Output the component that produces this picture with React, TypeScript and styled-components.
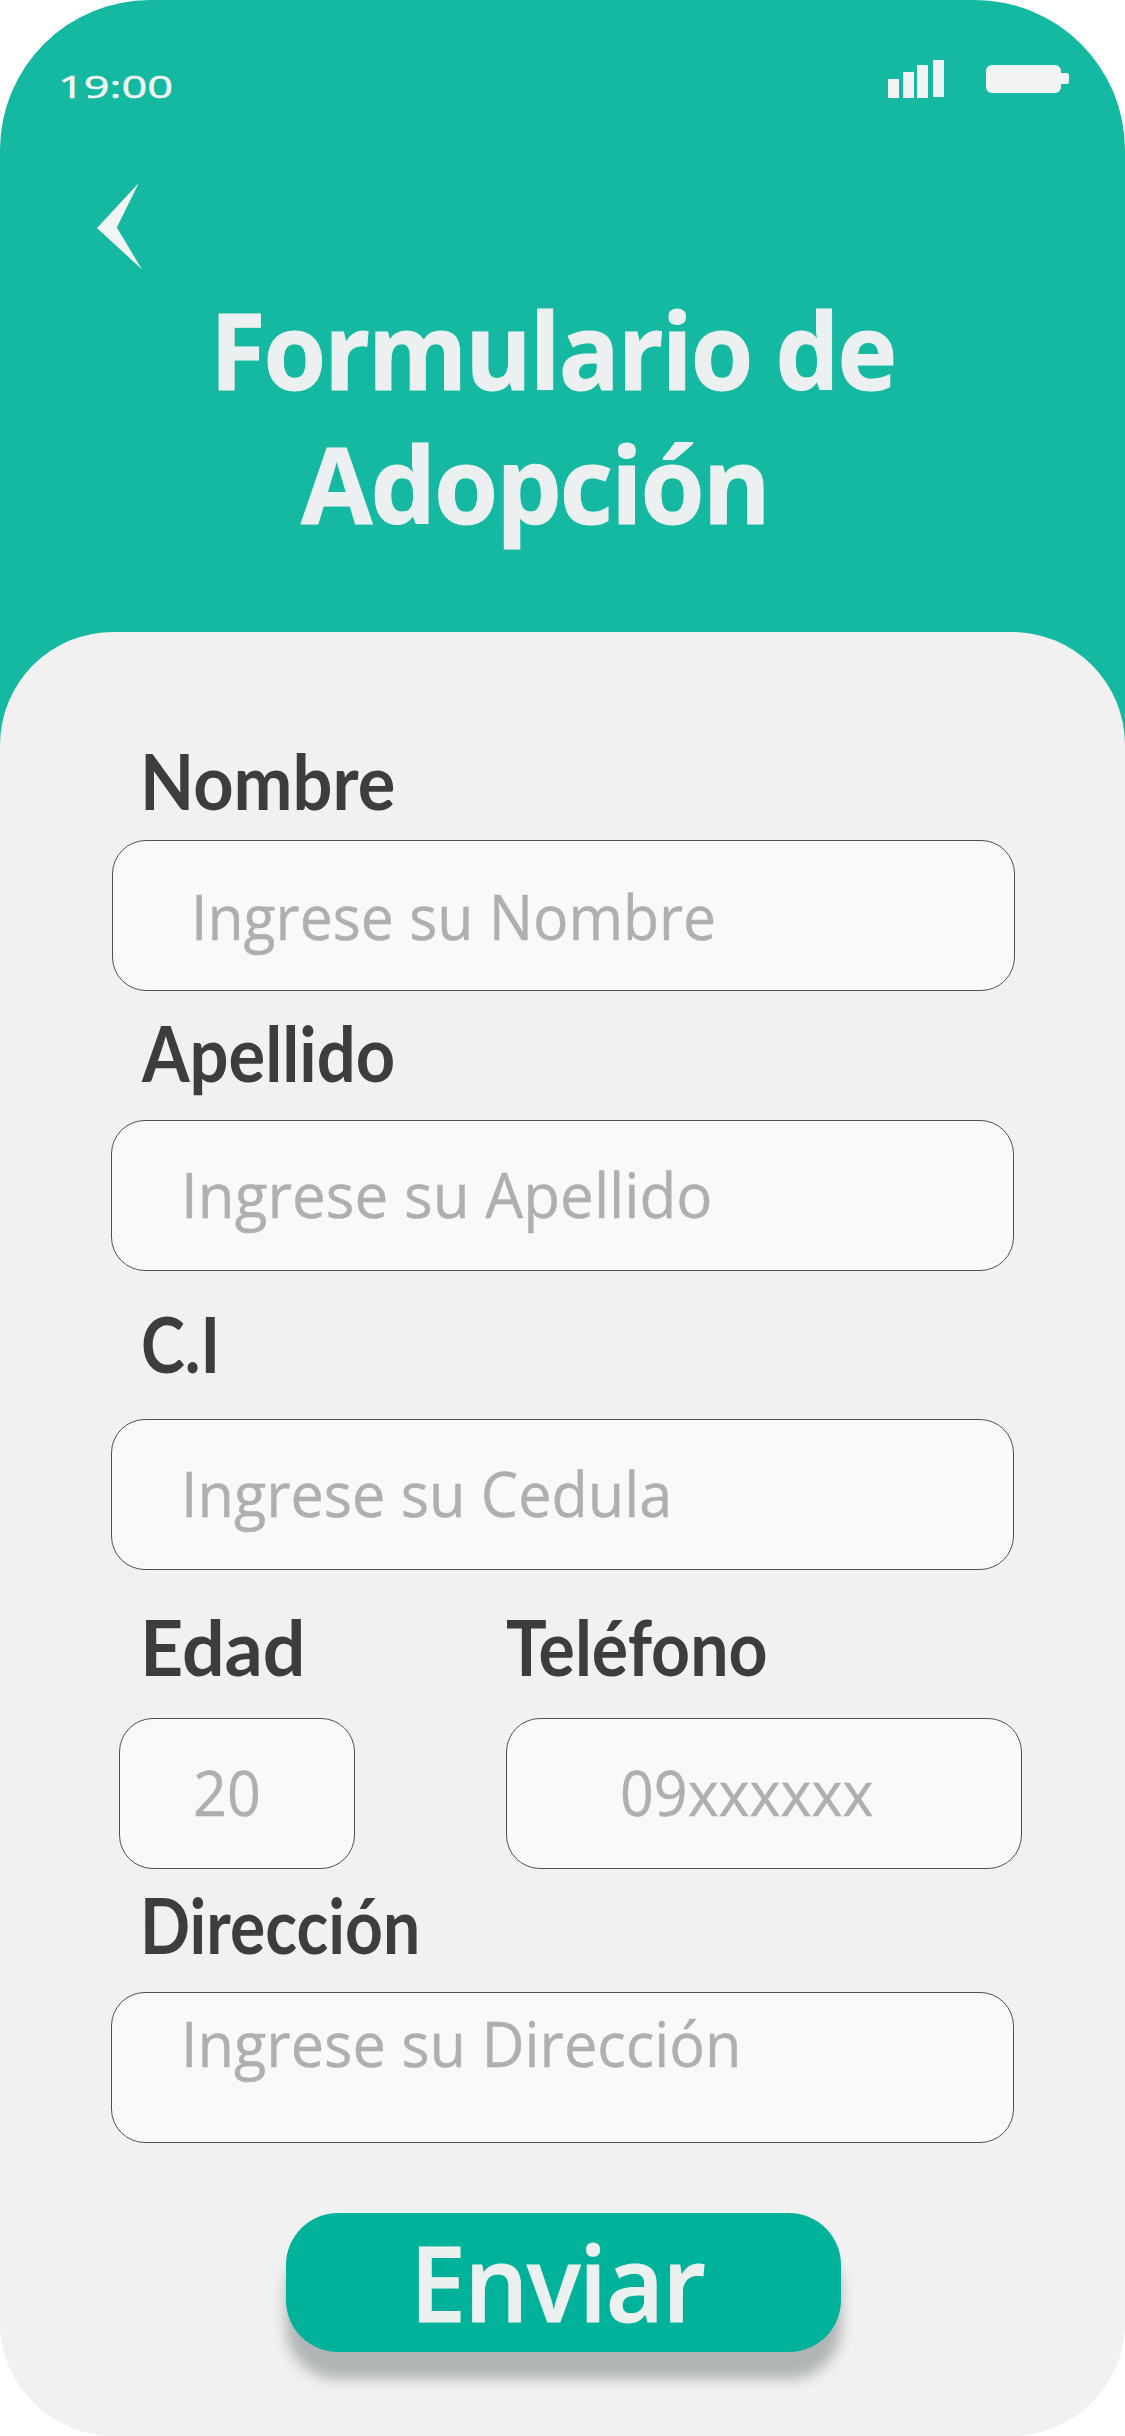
import React from "react";
import styled, { createGlobalStyle } from "styled-components";

const GlobalStyle = createGlobalStyle`
  body {
    margin: 0;
    background: #ffffff;
  }
  * {
    box-sizing: border-box;
  }
`;

const sans = `"Open Sans", "Noto Sans", sans-serif`;

const Phone = styled.main`
  display: flex;
  flex-direction: column;
  width: 1125px;
  height: 2436px;
  overflow: hidden;
  border-radius: 150px 150px 114px 114px;
  background: linear-gradient(#15b8a0 0 1200px, #f1f1f1 1200px);
  font-family: ${sans};
`;

const Header = styled.header`
  display: flex;
  flex-direction: column;
  height: 632px;
`;

const StatusBar = styled.div`
  display: flex;
  align-items: flex-start;
  height: 183px;
  padding: 60px 56px 0 58px;
`;

/* Single line of text whose glyphs are narrowed or widened to a set width. */
const Line = styled.span<{ $stretch: number }>`
  display: block;
  width: max-content;
  white-space: nowrap;
  transform: scaleX(${(p) => p.$stretch});
  transform-origin: 0 0;
`;

const Clock = styled.div`
  flex: 1;
  padding-top: 5px;
  font-size: 31px;
  line-height: 42px;
  color: #f3f5f5;
  -webkit-text-stroke: 0.5px #f3f5f5;
`;

const Signal = styled.svg`
  display: block;
  width: 57px;
  height: 38px;
  margin-right: 41px;
`;

const Battery = styled.svg`
  display: block;
  width: 83px;
  height: 28px;
  margin-top: 5px;
`;

const BackButton = styled.button`
  display: block;
  width: 46px;
  height: 87px;
  margin-left: 97px;
  padding: 0;
  border: 0;
  background: none;

  svg {
    display: block;
  }
`;

const Title = styled.h1`
  margin: 13px 0 0;
  font-size: 105px;
  font-weight: 700;
  line-height: 134px;
  letter-spacing: -2px;
  color: #edf0f0;
  -webkit-text-stroke: 1px #edf0f0;
`;

const TitleLine = styled(Line)<{ $indent: number }>`
  margin-left: ${(p) => p.$indent}px;
`;

const Panel = styled.form`
  display: flex;
  flex: 1;
  flex-direction: column;
  padding-top: 102px;
  border-radius: 113px 113px 0 0;
  background: #f1f1f1;
`;

const FieldRow = styled.div<{ $gapTop: number }>`
  display: flex;
  margin-top: ${(p) => p.$gapTop}px;
`;

const FieldGroup = styled.div<{ $left: number; $width: number }>`
  width: ${(p) => p.$width}px;
  margin-left: ${(p) => p.$left}px;
`;

const Label = styled.label<{ $indent: number }>`
  display: block;
  height: 90px;
  padding-left: ${(p) => p.$indent}px;
  font-family: Lato, ${sans};
  font-size: 76px;
  font-weight: 700;
  line-height: 93px;
  color: #3d3d3d;
`;

const Box = styled.div<{ $gap: number; $padX: number; $padY: number }>`
  height: 151px;
  margin-top: ${(p) => p.$gap}px;
  padding: ${(p) => p.$padY}px 0 0 ${(p) => p.$padX}px;
  border: 1px solid #505050;
  border-radius: 34px;
  background: #f9f9f9;
  font-size: 62px;
  line-height: 84px;
  color: #b1aeae;
  -webkit-text-stroke: 0.4px #b1aeae;
`;

const Submit = styled.button`
  display: block;
  width: 555px;
  height: 139px;
  margin: 70px 0 0 286px;
  padding: 0 0 2px 124px;
  border: 0;
  border-radius: 52px;
  background: #00b299;
  box-shadow: 0 27px 14px #b0b4b4;
  font-family: ${sans};
  font-size: 105px;
  font-weight: 600;
  line-height: 137px;
  letter-spacing: -1.5px;
  text-align: left;
  color: #ecf0ef;
  -webkit-text-stroke: 1px #ecf0ef;
`;

type FieldProps = {
  left: number;
  width: number;
  label: string;
  labelIndent: number;
  labelStretch: number;
  gap: number;
  hint: string;
  hintX: number;
  hintY?: number;
  hintStretch: number;
};

function Field(p: FieldProps) {
  return (
    <FieldGroup $left={p.left} $width={p.width}>
      <Label $indent={p.labelIndent}>
        <Line $stretch={p.labelStretch}>{p.label}</Line>
      </Label>
      <Box $gap={p.gap} $padX={p.hintX} $padY={p.hintY ?? 31}>
        <Line $stretch={p.hintStretch}>{p.hint}</Line>
      </Box>
    </FieldGroup>
  );
}

export default function App() {
  return (
    <>
      <GlobalStyle />
      <Phone>
        <Header>
          <StatusBar>
            <Clock>
              <Line $stretch={1.456}>19:00</Line>
            </Clock>
            <Signal viewBox="0 0 57 38" fill="#f2f3f3">
              <rect x="0" y="19" width="11" height="19" />
              <rect x="15" y="12" width="11" height="26" />
              <rect x="29" y="5" width="11" height="33" />
              <rect x="45" y="0" width="11" height="37" />
            </Signal>
            <Battery viewBox="0 0 83 28" fill="#f1f3f5">
              <rect x="0" y="0" width="75" height="28" rx="6" />
              <rect x="72" y="8" width="11" height="11" rx="2.5" />
            </Battery>
          </StatusBar>
          <BackButton type="button" aria-label="Volver">
            <svg width="46" height="87" viewBox="0 0 46 87" fill="#f1f6f5">
              <path d="M41.8 0 L0 45 L45 86.5 L19.8 44.6 Z" />
            </svg>
          </BackButton>
          <Title>
            <TitleLine $indent={209.5} $stretch={0.962}>
              Formulario de
            </TitleLine>
            <TitleLine $indent={300.7} $stretch={0.986}>
              Adopción
            </TitleLine>
          </Title>
        </Header>
        <Panel>
          <FieldRow $gapTop={0}>
            <Field left={112} width={903} label="Nombre" labelIndent={28} labelStretch={0.926}
              gap={16} hint="Ingrese su Nombre" hintX={77.7} hintY={33} hintStretch={0.95} />
          </FieldRow>
          <FieldRow $gapTop={15}>
            <Field left={111} width={903} label="Apellido" labelIndent={30.5} labelStretch={0.903}
              gap={24} hint="Ingrese su Apellido" hintX={69} hintStretch={0.971} />
          </FieldRow>
          <FieldRow $gapTop={26}>
            <Field left={111} width={903} label="C.I" labelIndent={29.5} labelStretch={0.871}
              gap={32} hint="Ingrese su Cedula" hintX={69} hintStretch={0.957} />
          </FieldRow>
          <FieldRow $gapTop={30}>
            <Field left={119} width={236} label="Edad" labelIndent={20.5} labelStretch={0.99}
              gap={28} hint="20" hintX={72.5} hintStretch={0.957} />
            <Field left={151} width={516} label="Teléfono" labelIndent={0} labelStretch={0.895}
              gap={28} hint="09xxxxxx" hintX={112.5} hintStretch={0.954} />
          </FieldRow>
          <FieldRow $gapTop={9}>
            <Field left={111} width={903} label="Dirección" labelIndent={28.5} labelStretch={0.868}
              gap={24} hint="Ingrese su Dirección" hintX={68.6} hintY={8} hintStretch={0.959} />
          </FieldRow>
          <Submit type="button">
            <Line $stretch={0.956}>Enviar</Line>
          </Submit>
        </Panel>
      </Phone>
    </>
  );
}
